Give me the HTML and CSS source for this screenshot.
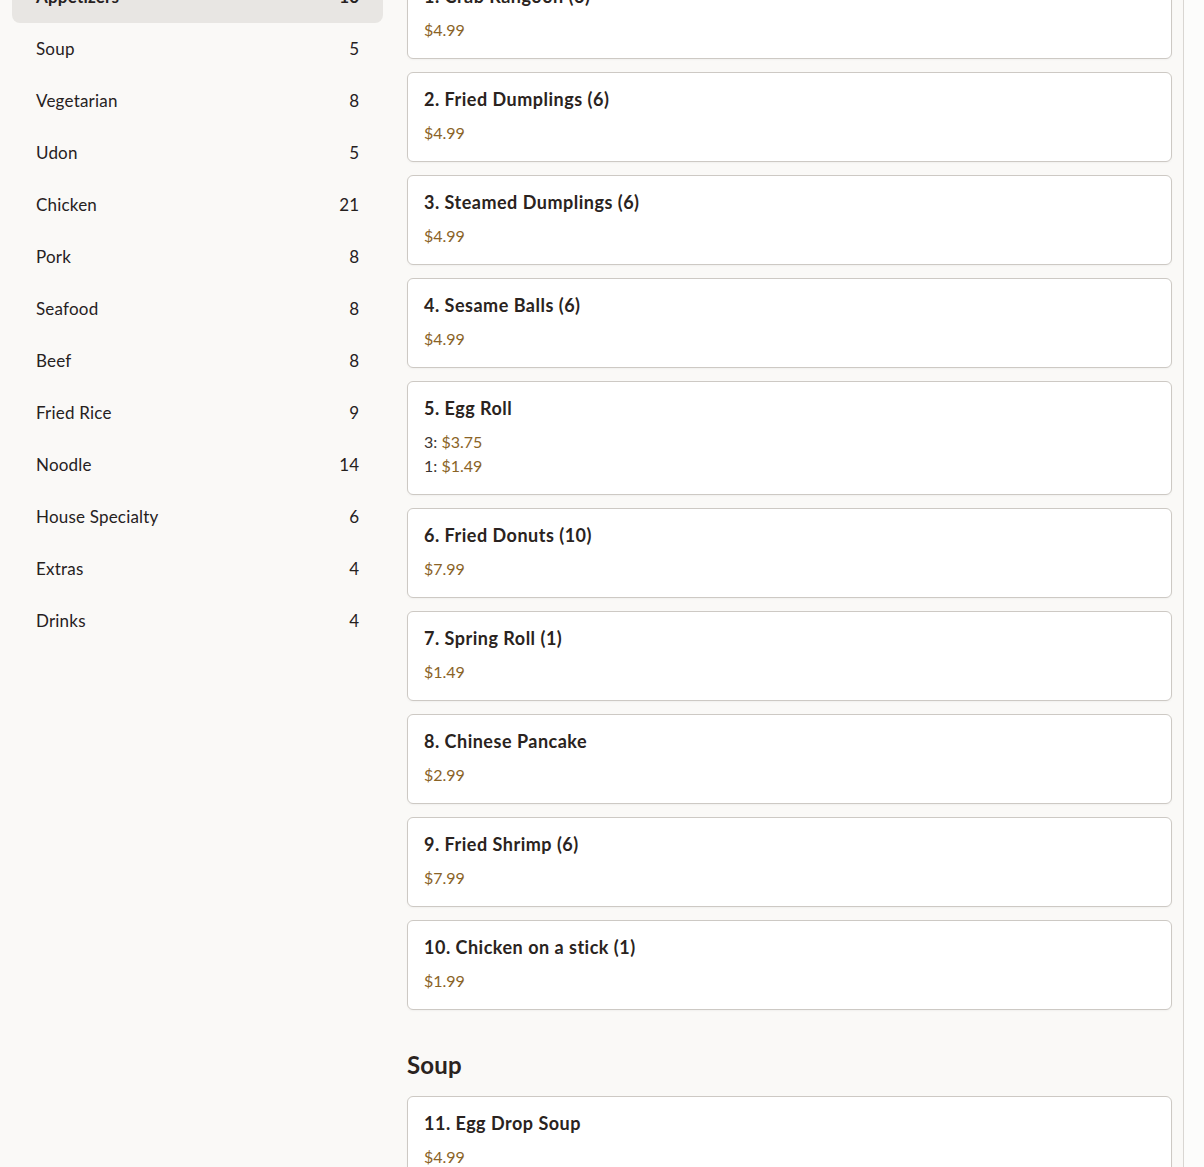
FILE: index.html
```html
<!DOCTYPE html>
<html lang="en">
<head>
<meta charset="utf-8">
<title>Menu</title>
<link rel="stylesheet" href="styles.css">
</head>
<body>
<div class="page">
  <div class="layout">
    <aside class="sidebar">
      <ul class="cats">
        <li class="cat active"><span>Appetizers</span><span class="count">10</span></li>
        <li class="cat"><span>Soup</span><span class="count">5</span></li>
        <li class="cat"><span>Vegetarian</span><span class="count">8</span></li>
        <li class="cat"><span>Udon</span><span class="count">5</span></li>
        <li class="cat"><span>Chicken</span><span class="count">21</span></li>
        <li class="cat"><span>Pork</span><span class="count">8</span></li>
        <li class="cat"><span>Seafood</span><span class="count">8</span></li>
        <li class="cat"><span>Beef</span><span class="count">8</span></li>
        <li class="cat"><span>Fried Rice</span><span class="count">9</span></li>
        <li class="cat"><span>Noodle</span><span class="count">14</span></li>
        <li class="cat"><span>House Specialty</span><span class="count">6</span></li>
        <li class="cat"><span>Extras</span><span class="count">4</span></li>
        <li class="cat"><span>Drinks</span><span class="count">4</span></li>
      </ul>
    </aside>
    <main class="menu">
      <section class="section">
        <div class="items">
          <div class="item"><div class="item-name">1. Crab Rangoon (6)</div><div class="price-line"><span class="price">$4.99</span></div></div>
          <div class="item"><div class="item-name">2. Fried Dumplings (6)</div><div class="price-line"><span class="price">$4.99</span></div></div>
          <div class="item"><div class="item-name">3. Steamed Dumplings (6)</div><div class="price-line"><span class="price">$4.99</span></div></div>
          <div class="item"><div class="item-name">4. Sesame Balls (6)</div><div class="price-line"><span class="price">$4.99</span></div></div>
          <div class="item"><div class="item-name">5. Egg Roll</div><div class="price-line">3: <span class="price">$3.75</span></div><div class="price-line">1: <span class="price">$1.49</span></div></div>
          <div class="item"><div class="item-name">6. Fried Donuts (10)</div><div class="price-line"><span class="price">$7.99</span></div></div>
          <div class="item"><div class="item-name">7. Spring Roll (1)</div><div class="price-line"><span class="price">$1.49</span></div></div>
          <div class="item"><div class="item-name">8. Chinese Pancake</div><div class="price-line"><span class="price">$2.99</span></div></div>
          <div class="item"><div class="item-name">9. Fried Shrimp (6)</div><div class="price-line"><span class="price">$7.99</span></div></div>
          <div class="item"><div class="item-name">10. Chicken on a stick (1)</div><div class="price-line"><span class="price">$1.99</span></div></div>
        </div>
      </section>
      <section class="section">
        <h2 class="section-title">Soup</h2>
        <div class="items">
          <div class="item"><div class="item-name">11. Egg Drop Soup</div><div class="price-line"><span class="price">$4.99</span></div></div>
          <div class="item"><div class="item-name">12. Wonton Soup</div><div class="price-line"><span class="price">$4.99</span></div></div>
        </div>
      </section>
    </main>
  </div>
  <div class="track"></div>
</div>
</body>
</html>
```

FILE: styles.css
```css
html, body {
  margin: 0;
  padding: 0;
  height: 100%;
  overflow: hidden;
}
body {
  background: #faf9f7;
  color: #2a2320;
  font-family: "Lato", "Noto Sans", sans-serif;
}
.page {
  display: flex;
  height: 1167px;
  overflow: hidden;
}
.layout {
  width: 1160px;
  padding: 0 11px 0 12px;
  border-right: 1px solid #d9d6d2;
  display: flex;
  gap: 24px;
  align-items: flex-start;
}
.track {
  flex: 1;
  background: #fcfcfb;
}
.sidebar {
  width: 371px;
  flex: none;
  margin-top: -29px;
}
.cats {
  list-style: none;
  margin: 0;
  padding: 0;
}
.cat {
  display: flex;
  justify-content: space-between;
  align-items: center;
  padding: 14px 24px 14px 24px;
  font-size: 17px;
  line-height: 24px;
  letter-spacing: 0.2px;
  color: #26211e;
  border-radius: 8px;
}
.cat .count {
  letter-spacing: 0;
}
.cat.active {
  background: #e8e6e3;
  font-weight: 700;
}
.menu {
  flex: 1;
  margin-top: -31px;
  display: flex;
  flex-direction: column;
  gap: 40px;
}
.section-title {
  margin: 0 0 17px;
  font-size: 24px;
  line-height: 29px;
  font-weight: 700;
  letter-spacing: 0.2px;
  color: #2a2320;
}
.items {
  display: flex;
  flex-direction: column;
  gap: 13px;
}
.item {
  background: #ffffff;
  border: 1px solid #cdc9c4;
  border-radius: 6px;
  padding: 16px 16px 16px 16px;
  box-shadow: 0 1px 2px rgba(0,0,0,0.04);
}
.item-name {
  font-size: 18px;
  line-height: 21px;
  font-weight: 700;
  letter-spacing: 0.5px;
  color: #2a2320;
  margin-bottom: 11px;
}
.price-line {
  font-size: 16px;
  line-height: 24px;
  color: #3a3430;
}
.price {
  color: #8a6326;
}
```
